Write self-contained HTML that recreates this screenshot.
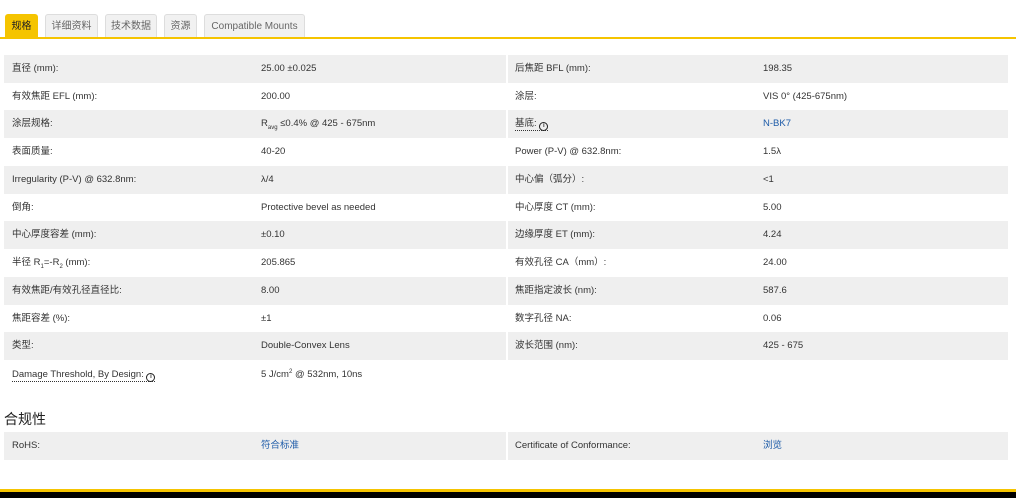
<!DOCTYPE html>
<html><head><meta charset="utf-8"><style>
*{margin:0;padding:0;box-sizing:border-box}
body{width:1016px;height:498px;background:#fff;font-family:"Liberation Sans","Noto Sans CJK SC",sans-serif;font-size:9.5px;color:#333;position:relative;overflow:hidden}
.tab{position:absolute;top:14px;height:24px;background:#f1f1f1;border:1px solid #ddd;border-bottom:none;border-radius:3px 3px 0 0;color:#666;font-size:10px;line-height:23px;text-align:center}
.tab.a{background:#f5c400;border-color:#f5c400;color:#222}
.line{position:absolute;top:37px;left:0;width:1016px;height:2px;background:#f5c400}
.r{position:absolute;height:28px;line-height:28px;white-space:nowrap}
.g{background:#efefef}
.r>span{position:absolute}
.blue{color:#1d5ba8}
.u{border-bottom:1px dotted #333;padding-bottom:1px}
.i{display:inline-block;width:9px;height:9px;border:1.5px solid #222;border-radius:50%;font-size:6px;line-height:6px;text-align:center;font-weight:bold;font-style:normal;vertical-align:-1px}
sub,sup{font-size:6px;line-height:0}
</style></head><body>
<div class="tab a" style="left:5px;width:33px">规格</div>
<div class="tab" style="left:45px;width:53px">详细资料</div>
<div class="tab" style="left:105px;width:52px">技术数据</div>
<div class="tab" style="left:164px;width:33px">资源</div>
<div class="tab" style="left:204px;width:101px">Compatible Mounts</div>
<div class="line"></div>

<div class="r g" style="left:4px;width:502px;top:55px"><span style="left:8px">直径 (mm):</span><span style="left:257px">25.00 ±0.025</span></div>
<div class="r" style="left:4px;width:502px;top:83px"><span style="left:8px">有效焦距 EFL (mm):</span><span style="left:257px">200.00</span></div>
<div class="r g" style="left:4px;width:502px;top:110px"><span style="left:8px">涂层规格:</span><span style="left:257px">R<sub>avg</sub> ≤0.4% @ 425 - 675nm</span></div>
<div class="r" style="left:4px;width:502px;top:138px"><span style="left:8px">表面质量:</span><span style="left:257px">40-20</span></div>
<div class="r g" style="left:4px;width:502px;top:166px"><span style="left:8px">Irregularity (P-V) @ 632.8nm:</span><span style="left:257px">λ/4</span></div>
<div class="r" style="left:4px;width:502px;top:194px"><span style="left:8px">倒角:</span><span style="left:257px">Protective bevel as needed</span></div>
<div class="r g" style="left:4px;width:502px;top:221px"><span style="left:8px">中心厚度容差 (mm):</span><span style="left:257px">±0.10</span></div>
<div class="r" style="left:4px;width:502px;top:249px"><span style="left:8px">半径 R<sub>1</sub>=-R<sub>2</sub> (mm):</span><span style="left:257px">205.865</span></div>
<div class="r g" style="left:4px;width:502px;top:277px"><span style="left:8px">有效焦距/有效孔径直径比:</span><span style="left:257px">8.00</span></div>
<div class="r" style="left:4px;width:502px;top:305px"><span style="left:8px">焦距容差 (%):</span><span style="left:257px">±1</span></div>
<div class="r g" style="left:4px;width:502px;top:332px"><span style="left:8px">类型:</span><span style="left:257px">Double-Convex Lens</span></div>
<div class="r" style="left:4px;width:502px;top:361px"><span style="left:8px"><span class="u">Damage Threshold, By Design: <i class="i">i</i></span></span><span style="left:257px">5 J/cm<sup>2</sup> @ 532nm, 10ns</span></div>

<div class="r g" style="left:508px;width:500px;top:55px"><span style="left:7px">后焦距 BFL (mm):</span><span style="left:255px">198.35</span></div>
<div class="r" style="left:508px;width:500px;top:83px"><span style="left:7px">涂层:</span><span style="left:255px">VIS 0° (425-675nm)</span></div>
<div class="r g" style="left:508px;width:500px;top:110px"><span style="left:7px"><span class="u">基底: <i class="i">i</i></span></span><span style="left:255px" class="blue">N-BK7</span></div>
<div class="r" style="left:508px;width:500px;top:138px"><span style="left:7px">Power (P-V) @ 632.8nm:</span><span style="left:255px">1.5λ</span></div>
<div class="r g" style="left:508px;width:500px;top:166px"><span style="left:7px">中心偏（弧分）:</span><span style="left:255px">&lt;1</span></div>
<div class="r" style="left:508px;width:500px;top:194px"><span style="left:7px">中心厚度 CT (mm):</span><span style="left:255px">5.00</span></div>
<div class="r g" style="left:508px;width:500px;top:221px"><span style="left:7px">边缘厚度 ET (mm):</span><span style="left:255px">4.24</span></div>
<div class="r" style="left:508px;width:500px;top:249px"><span style="left:7px">有效孔径 CA（mm）:</span><span style="left:255px">24.00</span></div>
<div class="r g" style="left:508px;width:500px;top:277px"><span style="left:7px">焦距指定波长 (nm):</span><span style="left:255px">587.6</span></div>
<div class="r" style="left:508px;width:500px;top:305px"><span style="left:7px">数字孔径 NA:</span><span style="left:255px">0.06</span></div>
<div class="r g" style="left:508px;width:500px;top:332px"><span style="left:7px">波长范围 (nm):</span><span style="left:255px">425 - 675</span></div>

<div style="position:absolute;left:4px;top:409px;font-size:14px;color:#222">合规性</div>
<div class="r g" style="left:4px;width:502px;top:432px"><span style="left:8px">RoHS:</span><span style="left:257px" class="blue">符合标准</span></div>
<div class="r g" style="left:508px;width:500px;top:432px"><span style="left:7px">Certificate of Conformance:</span><span style="left:255px" class="blue">浏览</span></div>

<div style="position:absolute;left:0;top:489px;width:1016px;height:3px;background:#f5c400"></div>
<div style="position:absolute;left:0;top:492px;width:1016px;height:6px;background:#000"></div>
</body></html>
